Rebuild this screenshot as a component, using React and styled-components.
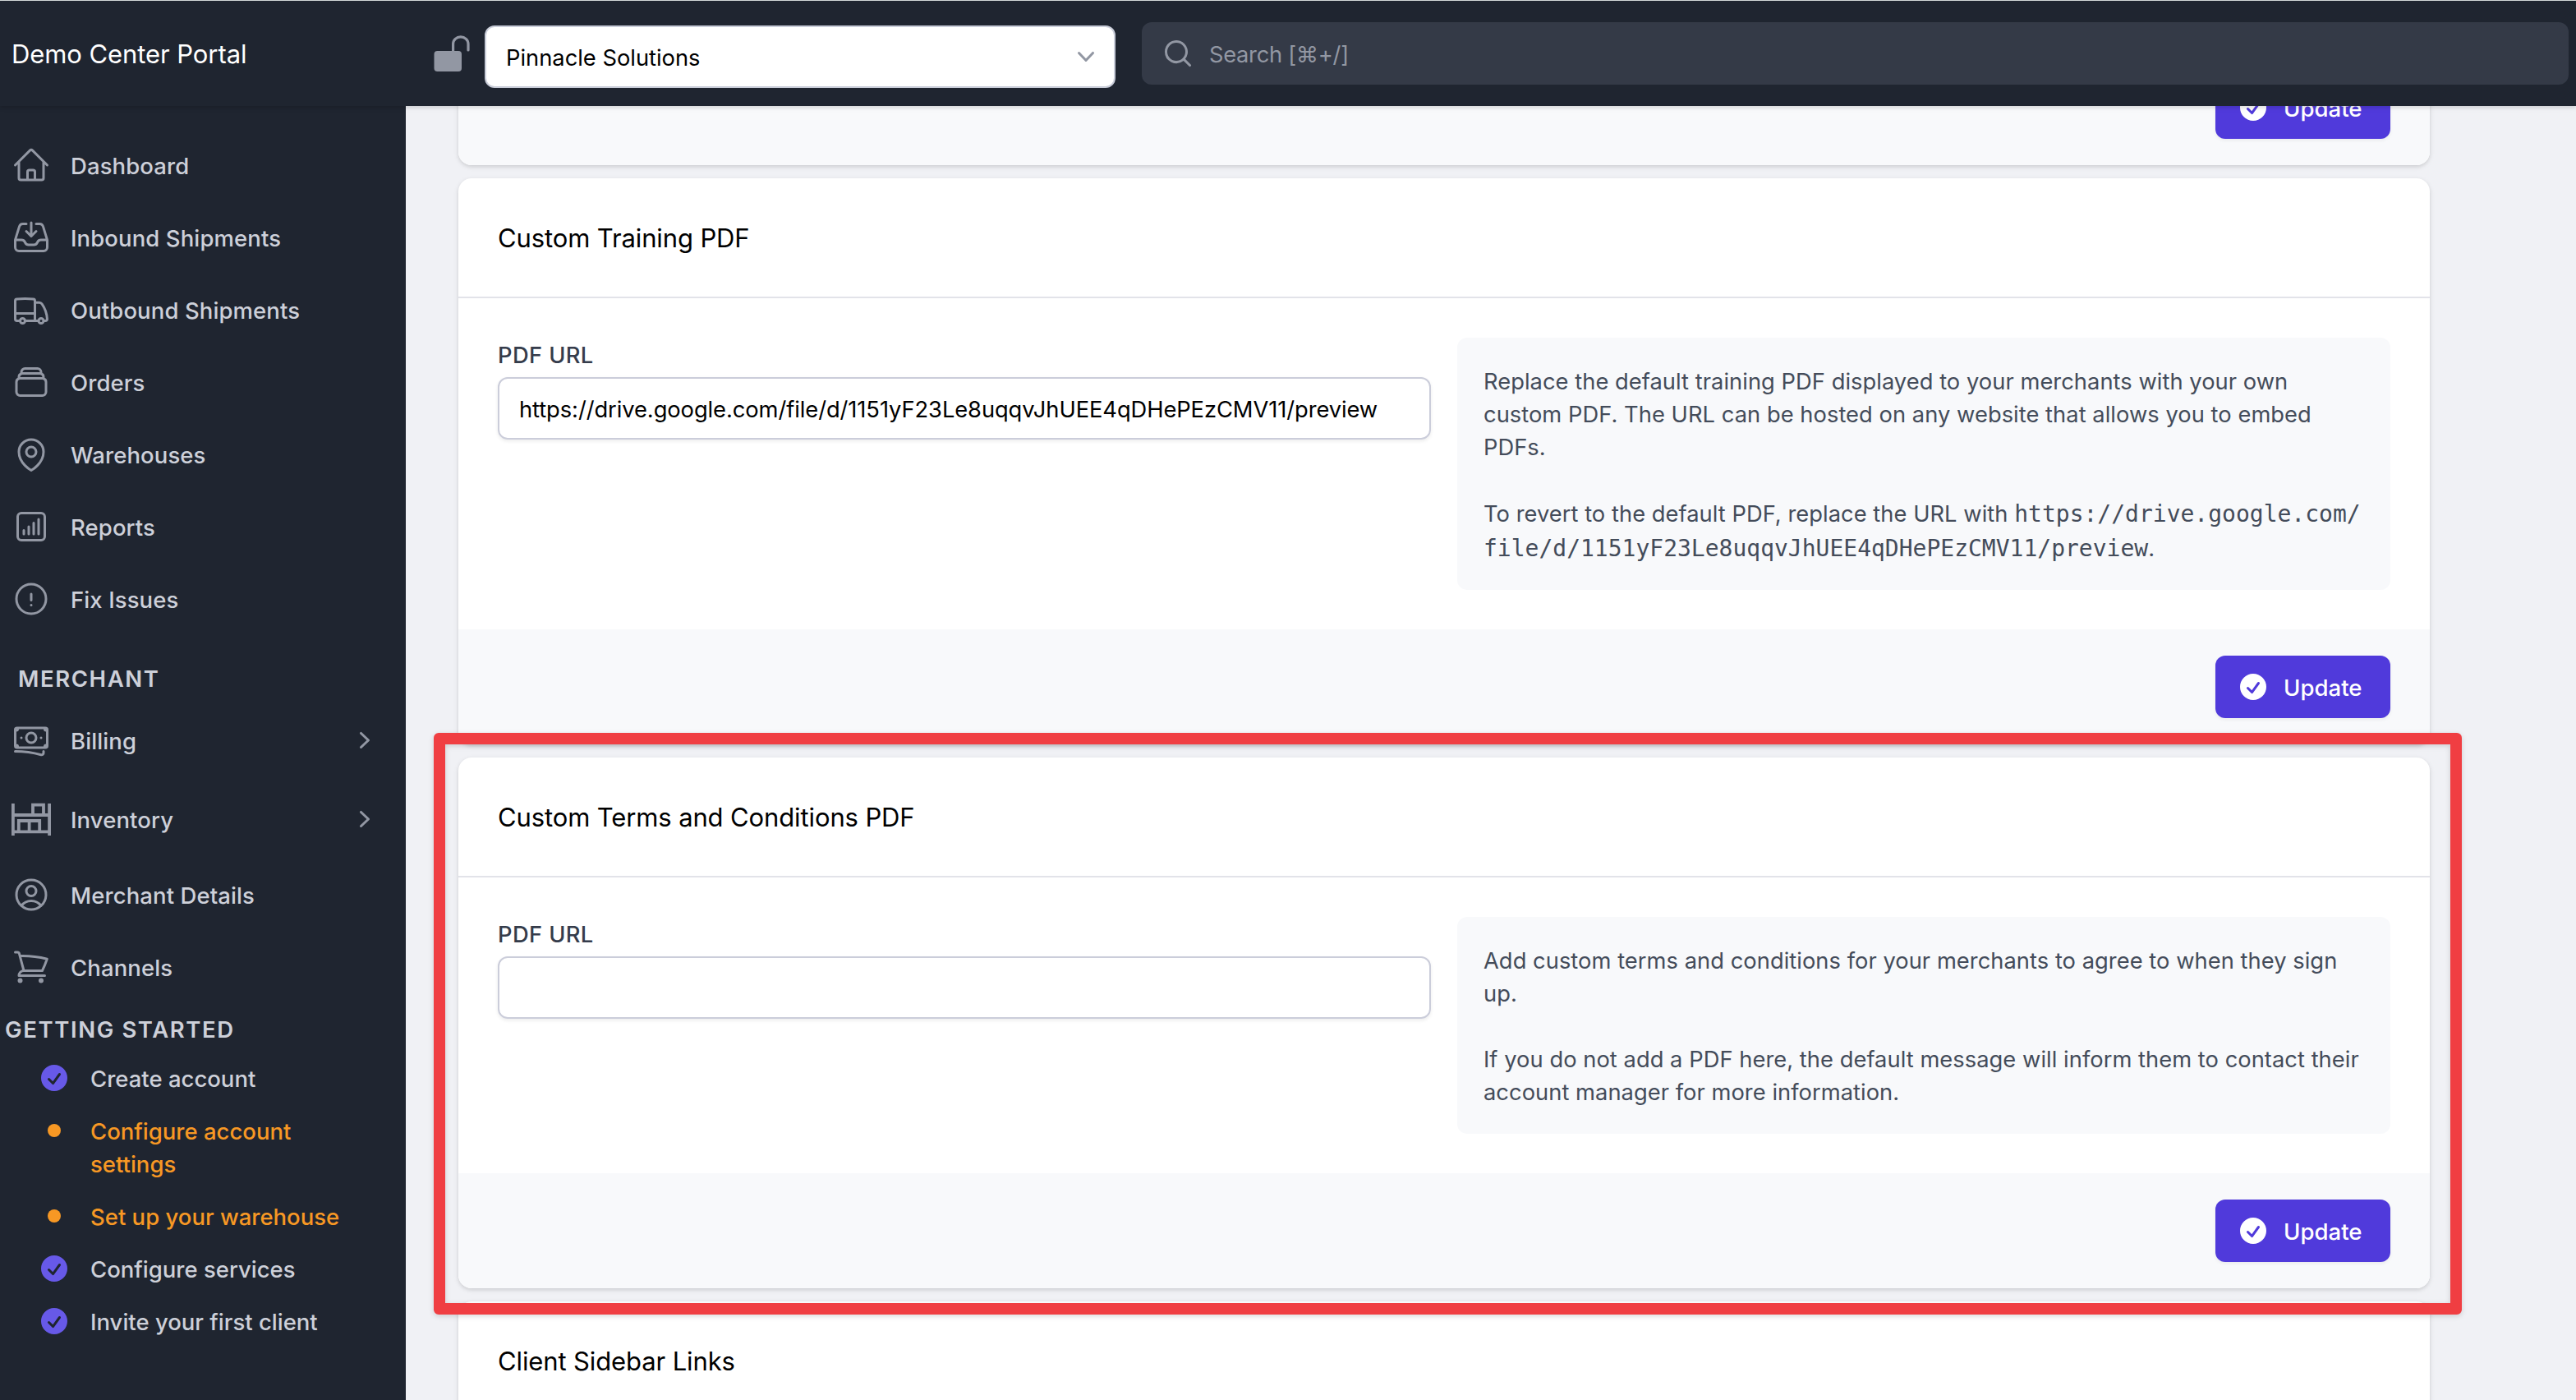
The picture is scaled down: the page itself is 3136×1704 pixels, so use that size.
import React from "react";
import styled, { createGlobalStyle } from "styled-components";
import {
  HiOutlineBanknotes,
  HiOutlineChartBarSquare,
  HiOutlineExclamationCircle,
  HiOutlineHome,
  HiOutlineInboxArrowDown,
  HiOutlineMapPin,
  HiOutlineRectangleStack,
  HiOutlineShoppingCart,
  HiOutlineTruck,
  HiOutlineUserCircle,
} from "react-icons/hi2";

const mainLinks = [
  { label: "Dashboard", icon: HiOutlineHome },
  { label: "Inbound Shipments", icon: HiOutlineInboxArrowDown },
  { label: "Outbound Shipments", icon: HiOutlineTruck },
  { label: "Orders", icon: HiOutlineRectangleStack },
  { label: "Warehouses", icon: HiOutlineMapPin },
  { label: "Reports", icon: HiOutlineChartBarSquare },
  { label: "Fix Issues", icon: HiOutlineExclamationCircle },
];

const merchantLinks = [
  { label: "Billing", icon: HiOutlineBanknotes, expandable: true },
  { label: "Inventory", icon: ShelvesIcon, expandable: true },
  { label: "Merchant Details", icon: HiOutlineUserCircle },
  { label: "Channels", icon: HiOutlineShoppingCart },
];

const steps = [
  { label: "Create account", done: true },
  { label: "Configure account settings", done: false },
  { label: "Set up your warehouse", done: false },
  { label: "Configure services", done: true },
  { label: "Invite your first client", done: true },
];

function ShelvesIcon() {
  return (
    <svg viewBox="0 0 48 48" fill="none" stroke="currentColor" strokeWidth="3.8">
      <path d="M1.9 5v39M46.1 5v39M2 19h44M2 39.3h44" />
      <path d="M26 19V6.7h13V19M8.8 39V26h25.4v13M21.6 26v13" />
    </svg>
  );
}

function LockOpenIcon() {
  return (
    <svg viewBox="0 0 44 44" fill="none">
      <rect x="0.5" y="19" width="33.5" height="25" rx="4" fill="currentColor" />
      <path
        d="M23.6 20V10.5a9.2 8.7 0 0 1 18.4 0V18"
        stroke="currentColor"
        strokeWidth="3.2"
        strokeLinecap="round"
      />
    </svg>
  );
}

function CheckCircleIcon() {
  return (
    <svg viewBox="0 0 20 20" fill="currentColor">
      <path
        fillRule="evenodd"
        clipRule="evenodd"
        d="M10 18a8 8 0 100-16 8 8 0 000 16zm3.857-9.809a.75.75 0 00-1.214-.882l-3.483 4.79-1.88-1.88a.75.75 0 10-1.06 1.061l2.5 2.5a.75.75 0 001.137-.089l4-5.5z"
      />
    </svg>
  );
}

function SearchIcon() {
  return (
    <svg viewBox="0 0 20 20" fill="currentColor">
      <path
        fillRule="evenodd"
        clipRule="evenodd"
        d="M9 3.5a5.5 5.5 0 100 11 5.5 5.5 0 000-11zM2 9a7 7 0 1112.452 4.391l3.328 3.329a.75.75 0 11-1.06 1.06l-3.329-3.328A7 7 0 012 9z"
      />
    </svg>
  );
}

function ChevronRightIcon() {
  return (
    <svg viewBox="0 0 20 20" fill="currentColor">
      <path d="M7.21 14.77a.75.75 0 01.02-1.06L11.168 10 7.23 6.29a.75.75 0 111.04-1.08l4.5 4.25a.75.75 0 010 1.08l-4.5 4.25a.75.75 0 01-1.06-.02z" />
    </svg>
  );
}

function ChevronDownIcon() {
  return (
    <svg viewBox="0 0 20 20" fill="currentColor">
      <path d="M5.23 7.21a.75.75 0 011.06.02L10 11.168l3.71-3.938a.75.75 0 111.08 1.04l-4.25 4.5a.75.75 0 01-1.08 0l-4.25-4.5a.75.75 0 01.02-1.06z" />
    </svg>
  );
}

function NavItem({ label, icon: Icon, expandable }) {
  return (
    <NavRow $tall={expandable}>
      <NavIcon>
        <Icon />
      </NavIcon>
      <NavLabel>{label}</NavLabel>
      {expandable && (
        <Expand>
          <ChevronRightIcon />
        </Expand>
      )}
    </NavRow>
  );
}

function Step({ label, done }) {
  return (
    <StepRow $done={done}>
      <StepMark $done={done}>{done ? <CheckCircleIcon /> : <Dot />}</StepMark>
      <StepLabel>{label}</StepLabel>
    </StepRow>
  );
}

function UpdateFooter() {
  return (
    <CardFooter>
      <Button>
        <SmallIcon>
          <CheckCircleIcon />
        </SmallIcon>
        <ButtonLabel>Update</ButtonLabel>
      </Button>
    </CardFooter>
  );
}

function PdfCard({ title, url, children }) {
  return (
    <Card>
      <CardHeader>{title}</CardHeader>
      <CardBody>
        <Field>
          <FieldLabel>PDF URL</FieldLabel>
          <Input>{url}</Input>
        </Field>
        <Info>{children}</Info>
      </CardBody>
      <UpdateFooter />
    </Card>
  );
}

function App() {
  return (
    <Page>
      <GlobalStyle />
      <Header>
        <Brand>Demo Center Portal</Brand>
        <Lock>
          <LockOpenIcon />
        </Lock>
        <Select>
          <BarText>Pinnacle Solutions</BarText>
          <SelectArrow>
            <ChevronDownIcon />
          </SelectArrow>
        </Select>
        <Search>
          <SmallIcon>
            <SearchIcon />
          </SmallIcon>
          <Placeholder>Search [⌘+/]</Placeholder>
        </Search>
      </Header>
      <Body>
        <Sidebar>
          <NavList>
            {mainLinks.map((link) => (
              <NavItem key={link.label} {...link} />
            ))}
          </NavList>
          <MerchantHeading>MERCHANT</MerchantHeading>
          <NavList>
            {merchantLinks.map((link) => (
              <NavItem key={link.label} {...link} />
            ))}
          </NavList>
          <StepsHeading>GETTING STARTED</StepsHeading>
          <StepList>
            {steps.map((step) => (
              <Step key={step.label} {...step} />
            ))}
          </StepList>
        </Sidebar>
        <Main>
          <CardStack>
            <Card>
              <UpdateFooter />
            </Card>
            <PdfCard
              title="Custom Training PDF"
              url="https://drive.google.com/file/d/1151yF23Le8uqqvJhUEE4qDHePEzCMV11/preview"
            >
              <p>
                Replace the default training PDF displayed to your merchants
                with your own custom PDF. The URL can be hosted on any website
                that allows you to embed PDFs.
              </p>
              <p>
                To revert to the default PDF, replace the URL with{" "}
                <Code>
                  https://drive.google.com/
                  <br />
                  file/d/1151yF23Le8uqqvJhUEE4qDHePEzCMV11/preview
                </Code>
                .
              </p>
            </PdfCard>
            <Highlight>
              <PdfCard title="Custom Terms and Conditions PDF">
                <p>
                  Add custom terms and conditions for your merchants to agree to
                  when they sign up.
                </p>
                <p>
                  If you do not add a PDF here, the default message will inform
                  them to contact their account manager for more information.
                </p>
              </PdfCard>
            </Highlight>
            <Card>
              <CardHeader>Client Sidebar Links</CardHeader>
            </Card>
          </CardStack>
        </Main>
      </Body>
    </Page>
  );
}

export default App;

const GlobalStyle = createGlobalStyle`
  * {
    box-sizing: border-box;
  }

  body {
    margin: 0;
    font-family: Inter, "Liberation Sans", sans-serif;
    font-size: 27.3px;
    line-height: 40px;
    -webkit-font-smoothing: antialiased;
  }

  svg {
    display: block;
    width: 100%;
    height: 100%;
  }
`;

const Page = styled.div`
  height: 1704px;
  display: flex;
  flex-direction: column;
  overflow: hidden;
  background: #f0f1f5;
  border-top: 1px solid #d3d8d8;
`;

const Header = styled.header`
  position: relative;
  z-index: 1;
  flex: none;
  height: 128px;
  display: flex;
  align-items: center;
  padding-right: 9px;
  background: #1f2530;
  box-shadow: 0 2px 6px rgba(0, 0, 0, 0.1), 0 2px 4px rgba(0, 0, 0, 0.06);
`;

const Brand = styled.div`
  width: 528px;
  padding: 2px 0 0 14px;
  color: #ffffff;
  font-size: 31px;
  font-weight: 400;
  letter-spacing: -0.08px;
`;

const Lock = styled.div`
  width: 44px;
  height: 44px;
  margin-right: 18px;
  color: #9297a3;
`;

const Select = styled.div`
  width: 768px;
  height: 76px;
  margin: 8px 32px 0 0;
  padding: 0 14px 0 24px;
  display: flex;
  align-items: center;
  justify-content: space-between;
  background: #ffffff;
  border: 2px solid #c9cdd9;
  border-radius: 12px;
  color: #000000;
`;

const BarText = styled.span`
  padding-top: 4px;
`;

const Placeholder = styled(BarText)`
  padding-left: 2px;
  letter-spacing: -0.3px;
`;

const SmallIcon = styled.span`
  flex: none;
  width: 40px;
  height: 40px;
  margin-right: 16px;
`;

const SelectArrow = styled.span`
  width: 40px;
  height: 40px;
  color: #9297a3;
`;

const Search = styled.div`
  flex: 1;
  height: 76px;
  padding: 0 24px;
  display: flex;
  align-items: center;
  background: #343a47;
  border-radius: 12px;
  color: #9297a3;
`;

const Body = styled.div`
  flex: 1;
  min-height: 0;
  display: flex;
`;

const Sidebar = styled.aside`
  flex: none;
  width: 494px;
  padding-top: 32px;
  background: #1f2530;
  color: #cdd0d9;
  font-size: 27.5px;
  font-weight: 500;
  letter-spacing: 0.1px;
`;

const NavList = styled.nav`
  display: flex;
  flex-direction: column;
  gap: 8px;
  padding: 0 30px 0 14px;
`;

const NavRow = styled.div`
  height: ${(props) => (props.$tall ? "88px" : "80px")};
  display: flex;
  align-items: center;
`;

const NavIcon = styled.span`
  width: 48px;
  height: 48px;
  margin-right: 24px;
  color: #9297a3;
`;

const NavLabel = styled.span`
  flex: 1;
  padding-top: 2px;
`;

const Expand = styled.span`
  width: 40px;
  height: 40px;
  color: #9297a3;
`;

const MerchantHeading = styled.div`
  padding: 37px 0 11px 22px;
  font-weight: 600;
  letter-spacing: 1.6px;
`;

const StepsHeading = styled(MerchantHeading)`
  padding: 16px 0 19px 6px;
`;

const StepList = styled.div`
  display: flex;
  flex-direction: column;
  gap: 24px;
  padding: 0 50px 0 46px;
  letter-spacing: 0;
`;

const StepRow = styled.div`
  display: flex;
  color: ${(props) => (props.$done ? "#cdd0d9" : "#f79824")};
`;

const StepMark = styled.span`
  flex: none;
  width: 40px;
  height: 40px;
  margin-right: 24px;
  display: flex;
  align-items: center;
  justify-content: center;
  color: ${(props) => (props.$done ? "#6759e8" : "#f79824")};
`;

const Dot = styled.span`
  width: 16px;
  height: 16px;
  border-radius: 50%;
  background: currentColor;
`;

const StepLabel = styled.span`
  padding-top: 1px;
  margin-bottom: -1px;
`;

const Main = styled.main`
  flex: 1;
  overflow: hidden;
  padding-left: 64px;
`;

/* pulled up so that the first card is scrolled under the header */
const CardStack = styled.div`
  width: 2400px;
  margin-top: -68px;
  display: flex;
  flex-direction: column;
  gap: 16px;
`;

const Card = styled.section`
  overflow: hidden;
  background: #ffffff;
  border-radius: 16px;
  box-shadow: 0 2px 6px rgba(0, 0, 0, 0.1), 0 2px 4px rgba(0, 0, 0, 0.06);
`;

const CardHeader = styled.div`
  height: 146px;
  padding: 2px 48px 0;
  display: flex;
  align-items: center;
  border-bottom: 2px solid #e2e3e9;
  color: #000000;
  font-size: 31px;
  font-weight: 400;
  letter-spacing: -0.12px;
`;

const CardBody = styled.div`
  display: grid;
  grid-template-columns: 1fr 1fr;
  gap: 32px;
  padding: 48px;
`;

const Field = styled.div``;

const FieldLabel = styled.div`
  padding-top: 2px;
  color: #353c4b;
  font-weight: 500;
  letter-spacing: 0.4px;
`;

const Input = styled.div`
  height: 76px;
  margin-top: 6px;
  padding: 4px 24px 0;
  display: flex;
  align-items: center;
  border: 2px solid #cbcdda;
  border-radius: 12px;
  box-shadow: 0 2px 4px rgba(0, 0, 0, 0.08);
  color: #000000;
  letter-spacing: -0.07px;
`;

const Info = styled.div`
  padding: 34px 32px 30px;
  background: #f8f9fb;
  border-radius: 12px;
  color: #444c5a;
  letter-spacing: 0.04px;

  p {
    margin: 0;
  }

  p + p {
    margin-top: 40px;
  }
`;

const Code = styled.code`
  font-family: "DejaVu Sans Mono", monospace;
  font-size: 28px;
  line-height: 41.5px;
  letter-spacing: 0;
`;

const CardFooter = styled.div`
  display: flex;
  justify-content: flex-end;
  padding: 32px 48px;
  background: #f8f9fb;
`;

const Button = styled.div`
  width: 213px;
  height: 76px;
  padding-left: 26px;
  display: flex;
  align-items: center;
  background: #503adb;
  border-radius: 12px;
  box-shadow: 0 2px 4px rgba(0, 0, 0, 0.06);
  color: #ffffff;
  font-weight: 500;
`;

const ButtonLabel = styled.span`
  padding: 2px 0 0 1px;
  font-size: 27.6px;
`;

const Highlight = styled.div`
  position: relative;

  &::after {
    content: "";
    position: absolute;
    inset: -30px -39px -32px -30px;
    border: 14px solid #f03e42;
    border-radius: 6px;
    filter: drop-shadow(0 2px 3px rgba(0, 0, 0, 0.15));
    z-index: 1;
  }
`;
